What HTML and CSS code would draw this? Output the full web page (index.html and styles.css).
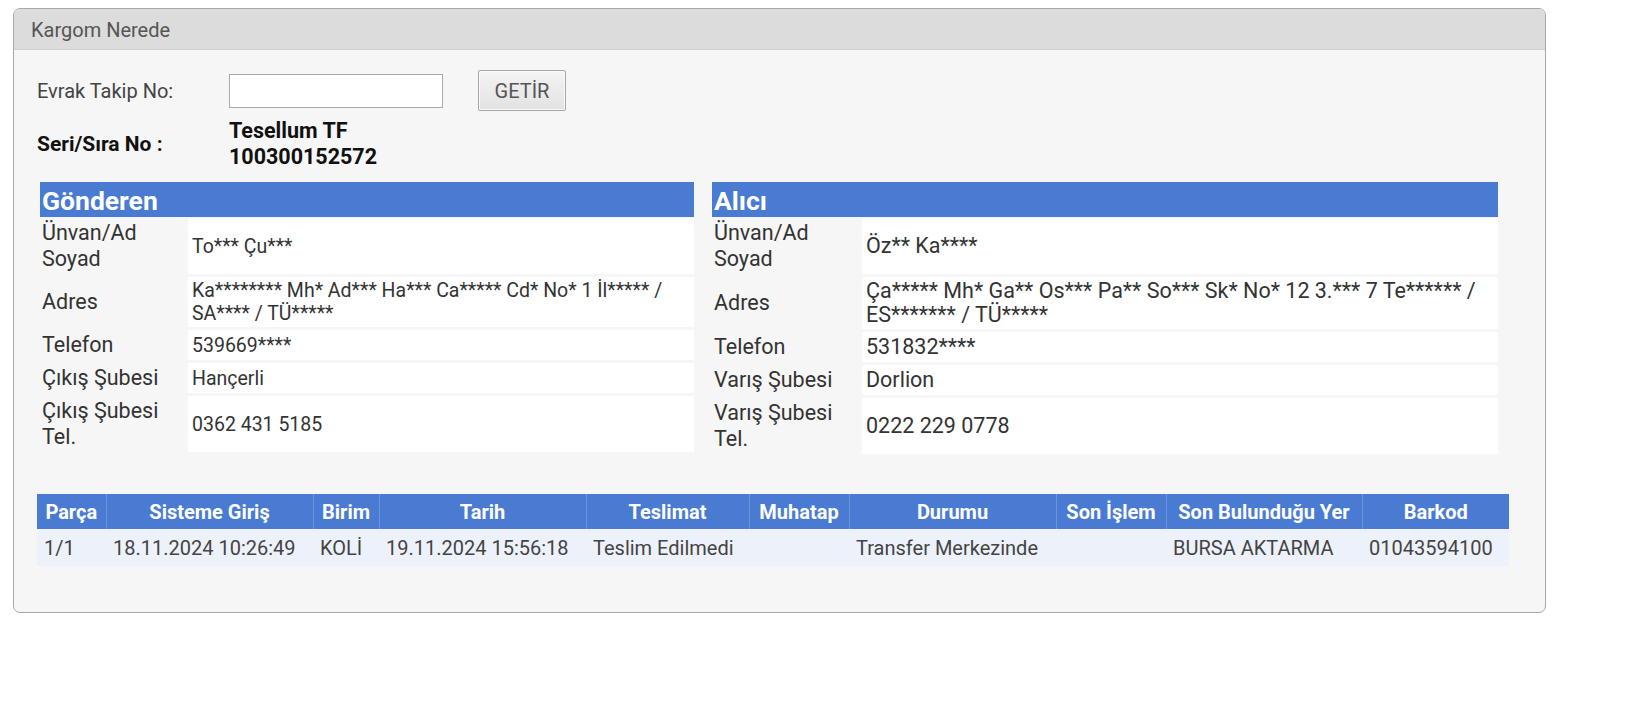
FILE: index.html
```html
<!DOCTYPE html>
<html lang="tr">
<head>
    <meta charset="UTF-8">
    <meta name="viewport" content="width=device-width, initial-scale=1.0">
    <title>Kargom Nerede</title>
    <link rel="stylesheet" href="styles.css">
</head>
<body>
    <div class="panel">
        <div class="panel-head">Kargom Nerede</div>
        <div class="panel-body">
            <div class="search-row">
                <label for="trackNo">Evrak Takip No:</label>
                <input type="text" id="trackNo">
                <button type="button">GETİR</button>
            </div>

            <div class="serial-row">
                <span class="serial-label">Seri/Sıra No :</span>
                <span class="serial-value">Tesellum TF<br>100300152572</span>
            </div>

            <div class="parties">
                <section class="party sender">
                    <h2>Gönderen</h2>
                    <div class="party-grid">
                        <div class="lbl">Ünvan/Ad Soyad</div>
                        <div class="val">To*** Çu***</div>
                        <div class="lbl">Adres</div>
                        <div class="val">Ka******** Mh* Ad*** Ha*** Ca***** Cd* No* 1 İl***** / SA**** / TÜ*****</div>
                        <div class="lbl">Telefon</div>
                        <div class="val">539669****</div>
                        <div class="lbl">Çıkış Şubesi</div>
                        <div class="val">Hançerli</div>
                        <div class="lbl">Çıkış Şubesi Tel.</div>
                        <div class="val">0362 431 5185</div>
                    </div>
                </section>

                <section class="party receiver">
                    <h2>Alıcı</h2>
                    <div class="party-grid">
                        <div class="lbl">Ünvan/Ad Soyad</div>
                        <div class="val">Öz** Ka****</div>
                        <div class="lbl">Adres</div>
                        <div class="val">Ça***** Mh* Ga** Os*** Pa** So*** Sk* No* 12 3.*** 7 Te****** / ES******* / TÜ*****</div>
                        <div class="lbl">Telefon</div>
                        <div class="val">531832****</div>
                        <div class="lbl">Varış Şubesi</div>
                        <div class="val">Dorlion</div>
                        <div class="lbl">Varış Şubesi Tel.</div>
                        <div class="val">0222 229 0778</div>
                    </div>
                </section>
            </div>

            <table class="moves">
                <thead>
                    <tr>
                        <th>Parça</th>
                        <th>Sisteme Giriş</th>
                        <th>Birim</th>
                        <th>Tarih</th>
                        <th>Teslimat</th>
                        <th>Muhatap</th>
                        <th>Durumu</th>
                        <th>Son İşlem</th>
                        <th>Son Bulunduğu Yer</th>
                        <th>Barkod</th>
                    </tr>
                </thead>
                <tbody>
                    <tr>
                        <td>1/1</td>
                        <td>18.11.2024 10:26:49</td>
                        <td>KOLİ</td>
                        <td>19.11.2024 15:56:18</td>
                        <td>Teslim Edilmedi</td>
                        <td></td>
                        <td>Transfer Merkezinde</td>
                        <td></td>
                        <td>BURSA AKTARMA</td>
                        <td>01043594100</td>
                    </tr>
                </tbody>
            </table>
        </div>
    </div>
</body>
</html>
```

FILE: styles.css
```css
body {
    margin: 8px 0 0 13px;
    background: #fff;
    font-family: Roboto, 'Liberation Sans', sans-serif;
    color: #333;
}

.panel {
    width: 1531px;
    border: 1px solid #a8a8a8;
    border-radius: 7px;
    background: #f6f6f6;
    overflow: hidden;
}

.panel-head {
    height: 40px;
    line-height: 42px;
    padding-left: 17px;
    background: #dcdcdc;
    border-bottom: 1px solid #d0d0d0;
    color: #555;
    font-size: 20px;
}

.panel-body {
    padding: 20px 23px 46px;
}

/* search form */
.search-row {
    display: flex;
    align-items: center;
    height: 41px;
}
.search-row label {
    width: 192px;
    font-size: 20px;
    color: #444;
}
.search-row input {
    width: 214px;
    height: 34px;
    box-sizing: border-box;
    border: 1px solid #a9a9a9;
    background: #fff;
    margin: 0;
}
.search-row button {
    margin-left: 35px;
    width: 88px;
    height: 41px;
    border: 1px solid #a6a6a6;
    border-radius: 2px;
    background: linear-gradient(#f4f4f4, #e2e2e2);
    box-shadow: inset 0 0 0 1px #fafafa;
    font-family: inherit;
    font-size: 20px;
    color: #555;
    cursor: pointer;
}

.serial-row {
    display: flex;
    align-items: center;
    margin-top: 7px;
    font-weight: bold;
    color: #111;
}
.serial-label {
    width: 192px;
    font-size: 21px;
}
.serial-value {
    font-size: 21.5px;
    line-height: 26px;
}

/* sender / receiver blocks */
.parties {
    display: grid;
    grid-template-columns: 654px 786px;
    column-gap: 18px;
    margin: 12px 0 0 3px;
}
.party h2 {
    margin: 0 0 1px;
    height: 35px;
    line-height: 37px;
    padding-left: 2px;
    background: #4a7bd2;
    color: #fff;
    font-size: 26.5px;
    font-weight: bold;
}
.party-grid {
    display: grid;
    grid-template-columns: 148px 1fr;
    row-gap: 3px;
}
.receiver .party-grid {
    grid-template-columns: 150px 1fr;
}
.party-grid .lbl {
    display: flex;
    align-items: center;
    padding: 2px 2px;
    font-size: 21.5px;
    line-height: 26px;
    color: #333;
}
.party-grid .val {
    display: flex;
    align-items: center;
    padding: 2px 4px;
    background: #fff;
    color: #333;
}
.sender .val {
    font-size: 19.5px;
    line-height: 23px;
}
.receiver .val {
    font-size: 21.5px;
    line-height: 24px;
}

/* movement table */
.moves {
    width: 1472px;
    margin-top: 40px;
    border-collapse: collapse;
    table-layout: fixed;
}
.moves th {
    box-sizing: border-box;
    height: 35px;
    padding: 0 4px;
    background: #4a7bd2;
    color: #fff;
    font-size: 20px;
    font-weight: bold;
    text-align: center;
    border-left: 1px solid #6c94dc;
    white-space: nowrap;
}
.moves th:first-child { border-left: none; }
.moves td {
    height: 37px;
    padding: 0 7px;
    background: #edf2fa;
    font-size: 20px;
    color: #444;
    white-space: nowrap;
}
.moves th:nth-child(1) { width: 69px; }
.moves th:nth-child(2) { width: 207px; }
.moves th:nth-child(3) { width: 66px; }
.moves th:nth-child(4) { width: 207px; }
.moves th:nth-child(5) { width: 163px; }
.moves th:nth-child(6) { width: 100px; }
.moves th:nth-child(7) { width: 207px; }
.moves th:nth-child(8) { width: 110px; }
.moves th:nth-child(9) { width: 196px; }
.moves th:nth-child(10) { width: 147px; }
```
